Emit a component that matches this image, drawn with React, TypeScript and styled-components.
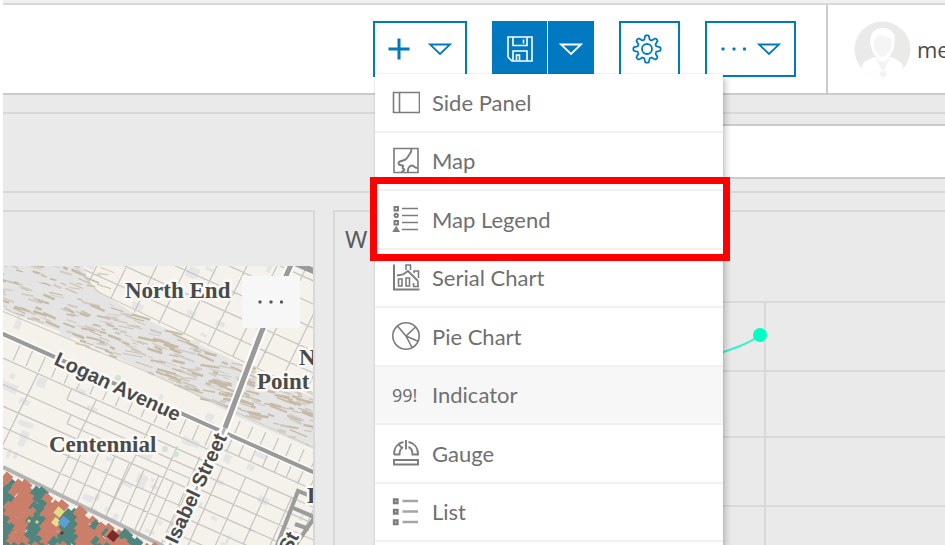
import React from "react";
import styled, { createGlobalStyle, css } from "styled-components";

const BLUE = "#0079c1";
const LINE = "#d8d8d8";
const EDGE = "#cbcbcb";
const SURFACE = "#eaeaea";

const GlobalStyle = createGlobalStyle`
  * { box-sizing: border-box; }
  body {
    margin: 0;
    background: #fff;
    overflow: hidden;
    font-family: Lato, "Open Sans", sans-serif;
    color: #707070;
  }
  button, input { font: inherit; color: inherit; margin: 0; padding: 0; }
`;

const Page = styled.div`
  display: flex;
  flex-direction: column;
  min-height: 100vh;
  margin-left: 3px;
  background: ${SURFACE};
`;

const TopStrip = styled.div`
  height: 3px;
  background: #f0f0f0;
`;

const Header = styled.header`
  display: flex;
  justify-content: flex-end;
  height: 92px;
  background: #fff;
  border-top: 2px solid ${LINE};
  border-bottom: 2px solid ${EDGE};
`;

const Toolbar = styled.div`
  display: flex;
  align-items: center;
  gap: 25px;
  padding-right: 30px;
`;

const ToolGroup = styled.div`
  position: relative;
  display: flex;
  gap: 1px;
`;

const ToolButton = styled.button<{ $width: number; $gap?: number; $padRight?: number; $solid?: boolean }>`
  display: flex;
  align-items: center;
  justify-content: center;
  gap: ${(p) => p.$gap ?? 0}px;
  width: ${(p) => p.$width}px;
  height: 56px;
  padding-right: ${(p) => p.$padRight ?? 0}px;
  border: 2px solid ${BLUE};
  background: ${(p) => (p.$solid ? BLUE : "#fff")};
  color: ${(p) => (p.$solid ? "#fff" : BLUE)};
  cursor: pointer;
  svg { display: block; flex: none; }
`;

const UserArea = styled.div`
  display: flex;
  align-items: center;
  gap: 6px;
  width: 119px;
  padding-left: 26px;
  border-left: 2px solid ${EDGE};
  overflow: hidden;
  svg { flex: none; }
`;

const UserName = styled.span`
  font: 22px/28px "Open Sans", sans-serif;
  color: #4c4c4c;
`;

const Menu = styled.ul`
  position: absolute;
  z-index: 2;
  top: 53px;
  left: 2px;
  display: grid;
  grid-template-rows: repeat(8, 1fr);
  width: 348px;
  height: 471px;
  margin: 0;
  padding: 0 0 3px;
  list-style: none;
  background: #fff;
  box-shadow: 3px 4px 6px rgba(0, 0, 0, 0.2), 0 0 2px rgba(0, 0, 0, 0.12);
`;

const MenuItem = styled.li<{ $hovered?: boolean }>`
  position: relative;
  display: flex;
  border-bottom: 2px solid #f1f1f1;
  background: ${(p) => (p.$hovered ? "#f7f7f7" : "#fff")};
`;

const MenuButton = styled.button`
  display: flex;
  flex: 1;
  align-items: center;
  gap: 12px;
  padding: 1px 0 0 17px;
  border: 0;
  background: none;
  font-size: 22px;
  line-height: 28px;
  text-align: left;
  cursor: pointer;
  svg { display: block; flex: none; }
`;

const Highlight = styled.span`
  position: absolute;
  z-index: 1;
  inset: -14px -7px -13px -5px;
  border: 7px solid #fe0000;
  pointer-events: none;
`;

const FilterBar = styled.section`
  display: flex;
  justify-content: flex-end;
  margin-top: 17px;
  padding-top: 10px;
  height: 81px;
  border-top: 2px solid ${LINE};
  border-bottom: 2px solid ${LINE};
`;

const FilterInput = styled.input`
  width: 50%;
  height: 55px;
  padding: 0 16px;
  border: 2px solid ${EDGE};
  border-right: 0;
  background: #fff;
`;

const Panels = styled.main`
  display: grid;
  grid-template-columns: minmax(312px, 1fr) minmax(0, 2fr);
  gap: 18px;
  flex: 1;
  margin-top: 17px;
`;

const panel = css`
  display: flex;
  flex-direction: column;
  min-width: 0;
  border-top: 2px solid ${LINE};
`;

const MapPanel = styled.section`
  ${panel}
  border-right: 2px solid ${LINE};
`;

const ChartPanel = styled.section`
  ${panel}
  border-left: 2px solid ${LINE};
`;

const PanelTitle = styled.h2`
  height: 54px;
  margin: 0;
  padding: 10px 10px 0;
  font: 24px/34px "Noto Sans", sans-serif;
  color: #5a5a5a;
`;

const MapBody = styled.div`
  position: relative;
  flex: 1;
  min-height: 279px;
  background: #f4f2ea;
  overflow: hidden;
  > svg { display: block; }
`;

const MapMenuButton = styled.button`
  position: absolute;
  top: 10px;
  right: 13px;
  display: flex;
  align-items: center;
  justify-content: center;
  width: 58px;
  height: 52px;
  border: 0;
  background: #f7f7f7;
  color: #555;
`;

const ChartBody = styled.div`
  flex: 1;
  svg { display: block; width: 100%; }
`;

/* ---------- icons ---------- */

const Plus = () => (
  <svg width="22" height="22" viewBox="0 0 22 22" stroke="currentColor" strokeWidth="3">
    <path d="M11 0.5v21M0.5 11h21" />
  </svg>
);

const Caret = () => (
  <svg width="24" height="14" viewBox="0 0 24 14" fill="none" stroke="currentColor" strokeWidth="1.800">
    <path d="M2 2.500h20L12 12z" />
  </svg>
);

const Dots = () => (
  <svg width="26" height="4" viewBox="0 0 26 4" fill="currentColor">
    <rect x="0.5" y="0.5" width="3" height="3" rx="0.8" />
    <rect x="11.5" y="0.5" width="3" height="3" rx="0.8" />
    <rect x="22" y="0.5" width="3" height="3" rx="0.8" />
  </svg>
);

const Floppy = () => (
  <svg width="28" height="28" viewBox="0 0 28 28" fill="none" stroke="currentColor" strokeWidth="1.6">
    <path d="M2 2h24v24H6l-4-4z" />
    <path d="M7 2.500v8h14v-8M17.500 4.500v4M7 25.500V16h14v9.500M10.500 25v-5h3v5" />
  </svg>
);

const gearPath = (() => {
  let d = "";
  for (let i = 0; i < 144; i++) {
    const a = (i / 144) * Math.PI * 2;
    const wave = Math.max(-1, Math.min(1, Math.cos(a * 8) * 1.6));
    const r = 11.6 + wave * 2;
    d += `${i ? "L" : "M"}${(15 + r * Math.cos(a)).toFixed(2)} ${(15 + r * Math.sin(a)).toFixed(2)}`;
  }
  return d + "z";
})();

const Gear = () => (
  <svg width="30" height="30" viewBox="0 0 30 30" fill="none" stroke="currentColor" strokeWidth="1.8" strokeLinejoin="round">
    <path d={gearPath} />
    <circle cx="15" cy="15" r="5" />
  </svg>
);

const Avatar = () => (
  <svg width="57" height="57" viewBox="0 0 57 57">
    <defs>
      <clipPath id="avatar"><circle cx="28.500" cy="28.500" r="28" /></clipPath>
    </defs>
    <g clipPath="url(#avatar)">
      <rect width="57" height="57" fill="#eaeae9" />
      <path d="M8 57V46c0-5 5-7 13-10h15c8 3 13 5 13 10v11z" fill="#fff" />
      <path d="M17 25c-3-12 3-18 12-18s14 6 11 18c-1 7-5 13-11 13s-11-6-12-13z" fill="#fff" />
      <path d="M20 24c0-6 3-9 6-10 4 2 9 2 11 3 2 8-1 17-8 19-6-1-9-6-9-12z" fill="#f5f5f5" />
      <path d="M21 37l8 14 7-14-7 4zM25 53l4-5 4 5-4 4z" fill="#f3f3f3" />
    </g>
  </svg>
);

const MenuSvg = ({ children }: { children: React.ReactNode }) => (
  <svg width="28" height="30" viewBox="0 0 28 30" fill="none" stroke="#7c7c7c" strokeWidth="1.6">
    {children}
  </svg>
);

const SidePanelIcon = () => (
  <MenuSvg><path d="M1.500 4.500h26v20h-26zM7.500 4.500v20" /></MenuSvg>
);
const MapIcon = () => (
  <MenuSvg>
    <path d="M2 2.500h24v24H2z" />
    <path d="M19.500 3c0 4-1 4-2.500 6s-2 4-4.500 5-5.500 1-6 3 2 2 4 2.500-1.500 3 1 3.500-1 2-2 3.500M16 26c-.5-3 1-6.500 4-6.500 2 0 2 2.500 5.500 2.500" strokeWidth="1.900" />
  </MenuSvg>
);
const LegendIcon = () => (
  <MenuSvg>
    <path d="M10 3.500h16M10 10.500h16M10 17.500h16M10 24.500h16" strokeWidth="1.700" />
    <path d="M2.500 2h3.500v3.500H2.500zM2.500 16h3.500v3.500H2.500zM4.200 22.500l2.200 3.500H2z" strokeWidth="1.900" />
    <circle cx="4.200" cy="10.500" r="1.700" strokeWidth="1.900" />
  </MenuSvg>
);
const SerialIcon = () => (
  <MenuSvg>
    <path d="M2 1.500v25h25.500" strokeWidth="2" />
    <path d="M6.500 23v-7h3.500v7zM14 23v-8h3.500v8zM21.500 23v-3M26 23v-5M21 23.500h6" />
    <path d="M5 12.500l6-1 5-3.500 6 6 4 4" strokeWidth="1.800" />
    <path d="M14 7V2h4.500v5M22 10V8h4.500v7" />
  </MenuSvg>
);
const PieIcon = () => (
  <MenuSvg>
    <circle cx="14" cy="14" r="13.200" />
    <path d="M5.500 4L14 14l9.500-9M14 14l12.500 5.500M14 14l6 11.500" />
  </MenuSvg>
);
const IndicatorText = styled.span`
  width: 28px;
  font: 18px/28px "Noto Sans", sans-serif;
`;
const IndicatorIcon = () => <IndicatorText aria-hidden>99!</IndicatorText>;
const GaugeIcon = () => (
  <MenuSvg>
    <path d="M2 15.500c0-7 4-11.500 9.500-12.500M16.500 3C22 4 26 8.500 26 15.500h-5.500c0-4-1.500-6.500-4-7.500M2 15.500h5.500c0-4 1-6 3.500-7.500M14 1v9.500M7 5.500l3.500 4.500M2 21h24v4.500H2z" strokeWidth="1.900" />
  </MenuSvg>
);
const ListIcon = () => (
  <MenuSvg>
    <path d="M10.500 4h15.500M10.500 14.500h15.500M10.500 25h15.500" stroke="#a5a5a5" strokeWidth="2.400" />
    <path d="M2 2.500h3.500v3.500H2zM2 13h3.500v3.500H2zM2 23.500h3.500v3.500H2z" strokeWidth="2.300" />
  </MenuSvg>
);

/* ---------- map drawing ---------- */

const random = (seed: number) => () => {
  seed = (seed * 16807) % 2147483647;
  return seed / 2147483647;
};

const rnd = random(4211);
const ANGLE = 24;

const railStreaks = Array.from({ length: 460 }, () => {
  const u = rnd() * 440 - 70;
  const v = -21 - rnd() * (u < 70 ? 80 : 50);
  return { u, v, len: 4 + rnd() * (u < 100 ? 13 : 16), w: 0.6 + rnd() * 2, tilt: rnd() * 18 - 16 };
});

const buildings = Array.from({ length: 190 }, () => ({
  u: rnd() * 460 - 70,
  v: rnd() * 400 - 230,
  w: 3 + rnd() * 10,
  h: 3 + rnd() * 7,
}));

let streets = "";
const street = (u1: number, v1: number, u2: number, v2: number) => {
  streets += `M${u1} ${v1}L${u2} ${v2}`;
};
[-92, -112, -133, -155, -176, -200, -222].forEach((v) => street(20, v, 400, v + 2));
for (let u = 30; u < 420; u += 27) street(u, -73, u + 6, -240);
[22, 46, 66, 85, 104].forEach((v) => street(-30, v, 240, v));
[16, 32, 47, 62, 78, 94, 112, 130, 150].forEach((v) => street(244, v, 420, v));
for (let u = 20; u < 240; u += 14) street(u, 0, u, 20);
for (let u = 252; u < 420; u += 13) street(u, 0, u, 16);
for (let u = 252; u < 420; u += 14) street(u, -17, u, -2);
[48, 112, 172].forEach((u) => street(u, 22, u - 4, 125));
for (let u = 120; u < 244; u += 16) street(u, 66, u, 125);
for (let u = 205; u < 400; u += 25) street(u, 32, u, 190);
street(85, 34, 235, 34);
street(85, 22, 85, 34);
street(95, 46, 95, 56);
street(95, 56, 235, 56);

const TILE_COLORS = ["#ca7f6a", "#4f857d"];
const tiles: { x: number; y: number; s: number; c: string }[] = [];
for (let row = 0; row < 13; row++) {
  for (let col = 0; col < 24; col++) {
    const x = col * 7 + (row % 2) * 3 + rnd() * 3;
    const y = 204 + row * 7 + rnd() * 3;
    if (y < 208 + x * 0.49) continue;
    const teal = (Math.floor((x + 6) / 16) % 2 === 0 ? 0.78 : 0.1) - (x > 95 ? 0.1 : 0);
    tiles.push({ x, y, s: 8 + rnd() * 3, c: TILE_COLORS[rnd() < teal ? 1 : 0] });
  }
}

const accents = [
  { x: 56, y: 246, s: 8, c: "#e2dc86" },
  { x: 53, y: 256, s: 7, c: "#e6df8e" },
  { x: 61, y: 256, s: 9, c: "#5c9fd6" },
  { x: 110, y: 270, s: 9, c: "#7c2b2b" },
  { x: 26, y: 255, s: 3, c: "#d5d37e" },
  { x: 34, y: 256, s: 3, c: "#d5d37e" },
  { x: 59, y: 267, s: 3, c: "#7c2b2b" },
];

const Label = styled.text`
  fill: #4a4a4a;
  stroke: #fbfaf6;
  stroke-width: 5px;
  stroke-linejoin: round;
  paint-order: stroke;
`;
const PlaceLabel = styled(Label)`
  font: bold 23px "Liberation Serif", serif;
`;
const StreetLabel = styled(Label)`
  font: bold 20px "Liberation Sans", sans-serif;
`;

const CityMap = () => (
  <svg width="100%" height="100%" role="img" aria-label="City map">
    <g transform={`translate(0 68) rotate(${ANGLE})`}>
      <g fill="#e6e5e6">
        {buildings.map((b, i) => <rect key={i} x={b.u} y={b.v} width={b.w} height={b.h} />)}
      </g>
      <path d={streets} fill="none" stroke="#c6c4c2" strokeWidth="1.200" />
      <path d="M-60 -20L-60 -125L42 -98L60 -80L110 -72L400 -66V-22L250 -20L160 -24L60 -26z" fill="#e5e4e4" />
      {railStreaks.map((s, i) => (
        <path
          key={i}
          d={`M${s.u} ${s.v}l${s.len} 0`}
          transform={`rotate(${s.tilt} ${s.u} ${s.v})`}
          stroke={i % 3 ? "#c6baa5" : "#d0ccc5"}
          strokeWidth={s.w}
        />
      ))}
      <path d="M30 -95L70 -77L400 -68M-40 -20L150 -24L400 -22" fill="none" stroke="#cfc8bc" />
      <path d="M-20 0H400" stroke="#fff" strokeWidth="7" />
      <path d="M-20 0H400" stroke="#9a9a9a" strokeWidth="4" />
    </g>
    <g fill="#cfe5cf">
      <circle cx="115" cy="112" r="3" />
      <circle cx="162" cy="183" r="3" />
      <circle cx="173" cy="188" r="3" />
    </g>
    <g fill="none">
      <path d="M290 -6L258 67L222 162L162 290" stroke="#fff" strokeWidth="9" />
      <path d="M290 -6L258 67L222 162" stroke="#9a9a9a" strokeWidth="5" />
      <path d="M222 162L162 290" stroke="#b5b5b5" strokeWidth="3" />
      <path d="M292 -3L322 10" stroke="#9a9a9a" strokeWidth="6" />
      <path d="M270 290L295 225L312 232M288 241L318 254M318 242L285 290M292 258L306 263" stroke="#9c9c9c" strokeWidth="4" />
      <path d="M0 201L160 280" stroke="#b4b4b4" strokeWidth="4" />
    </g>
    {[...tiles, ...accents].map((t, i) => (
      <rect key={i} x={t.x - t.s / 2} y={t.y - t.s / 2} width={t.s} height={t.s} fill={t.c} transform={`rotate(40 ${t.x} ${t.y})`} />
    ))}
    <StreetLabel transform="translate(50 98) rotate(25)">Logan Avenue</StreetLabel>
    <StreetLabel transform="translate(174 279) rotate(-65)">Isabel Street</StreetLabel>
    <StreetLabel transform="translate(287 288) rotate(-62)">St</StreetLabel>
    <PlaceLabel x="122" y="32">North End</PlaceLabel>
    <PlaceLabel x="46" y="186">Centennial</PlaceLabel>
    <PlaceLabel x="296" y="99">N</PlaceLabel>
    <PlaceLabel x="254" y="123">Point</PlaceLabel>
    <PlaceLabel x="304" y="237">D</PlaceLabel>
  </svg>
);

const TrendChart = () => (
  <svg height="279" role="img" aria-label="Line chart">
    <g stroke="#d9d9d9" strokeWidth="2">
      {[36, 105, 171, 240].map((y) => <line key={y} x1="50" x2="100%" y1={y} y2={y} />)}
      <line x1="430" x2="430" y1="36" y2="279" />
    </g>
    <path d="M370 92C395 84 412 79 425 69" fill="none" stroke="#33f3c8" strokeWidth="2" />
    <circle cx="425" cy="69" r="7" fill="#00ffc5" />
  </svg>
);

const menuEntries: { label: string; icon: React.ReactNode; hovered?: boolean; highlighted?: boolean }[] = [
  { label: "Side Panel", icon: <SidePanelIcon /> },
  { label: "Map", icon: <MapIcon /> },
  { label: "Map Legend", icon: <LegendIcon />, highlighted: true },
  { label: "Serial Chart", icon: <SerialIcon /> },
  { label: "Pie Chart", icon: <PieIcon /> },
  { label: "Indicator", icon: <IndicatorIcon />, hovered: true },
  { label: "Gauge", icon: <GaugeIcon /> },
  { label: "List", icon: <ListIcon /> },
];

export default function App() {
  return (
    <>
      <GlobalStyle />
      <Page>
        <TopStrip />
        <Header>
          <Toolbar>
            <ToolGroup>
              <ToolButton $width={94} $gap={18} aria-label="Add element" aria-expanded="true">
                <Plus />
                <Caret />
              </ToolButton>
              <Menu>
                {menuEntries.map((entry) => (
                  <MenuItem key={entry.label} $hovered={entry.hovered}>
                    <MenuButton>
                      {entry.icon}
                      {entry.label}
                    </MenuButton>
                    {entry.highlighted && <Highlight />}
                  </MenuItem>
                ))}
              </Menu>
            </ToolGroup>
            <ToolGroup>
              <ToolButton $width={55} $solid aria-label="Save"><Floppy /></ToolButton>
              <ToolButton $width={46} $solid aria-label="Save options"><Caret /></ToolButton>
            </ToolGroup>
            <ToolButton $width={61} $padRight={6} aria-label="Settings"><Gear /></ToolButton>
            <ToolButton $width={91} $gap={10} aria-label="More options">
              <Dots />
              <Caret />
            </ToolButton>
          </Toolbar>
          <UserArea>
            <Avatar />
            <UserName>me</UserName>
          </UserArea>
        </Header>
        <FilterBar>
          <FilterInput type="text" aria-label="Filter" />
        </FilterBar>
        <Panels>
          <MapPanel>
            <PanelTitle as="div" />
            <MapBody>
              <CityMap />
              <MapMenuButton aria-label="Map options"><Dots /></MapMenuButton>
            </MapBody>
          </MapPanel>
          <ChartPanel>
            <PanelTitle>W</PanelTitle>
            <ChartBody>
              <TrendChart />
            </ChartBody>
          </ChartPanel>
        </Panels>
      </Page>
    </>
  );
}
